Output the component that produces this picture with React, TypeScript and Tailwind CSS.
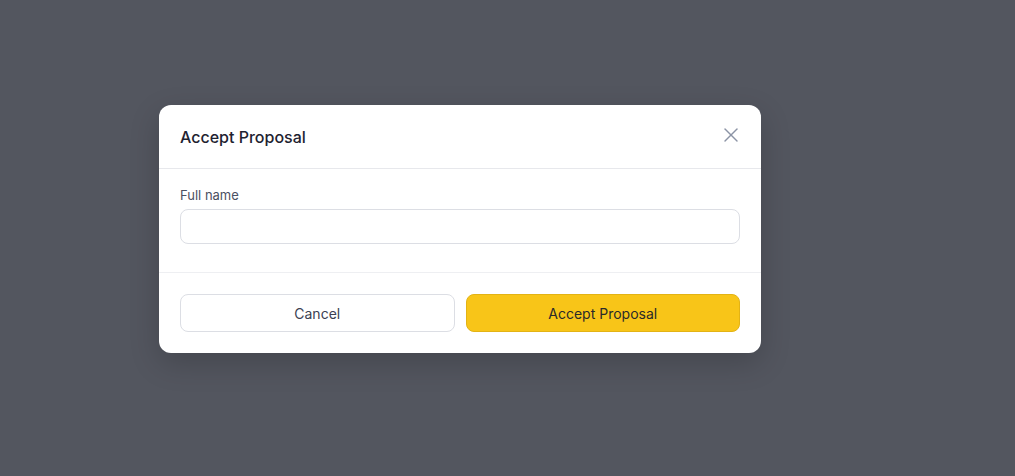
import { X } from 'lucide-react';

const App = () => {
  return (
    <div
      className="min-h-[476px] w-full bg-[#53565f] pl-[159px] pt-[105px]"
      style={{ fontFamily: 'Inter, "Noto Sans", sans-serif' }}
    >
      <div className="w-[602px] rounded-xl bg-white shadow-[0_10px_30px_rgba(0,0,0,0.18)]">
        {/* Header */}
        <div className="flex h-[64px] items-center justify-between border-b border-[#e7e8ec] pl-[21px] pr-[18px]">
          <h2 className="mt-[1px] text-[16px] font-medium text-[#1e2230]">Accept Proposal</h2>
          <button className="-mt-[4px] text-[#8b93a5]">
            <X size={24} strokeWidth={1.4} />
          </button>
        </div>

        {/* Body */}
        <div className="border-b border-[#eeeff2] px-[21px] pb-[28px] pt-[17px]">
          <label className="mb-[5px] block text-[13px] leading-[18px] text-[#4b5162]">Full name</label>
          <input
            type="text"
            className="block h-[35px] w-full rounded-lg border border-[#dcdee4] bg-white px-3 text-sm outline-none"
          />
        </div>

        {/* Footer */}
        <div className="flex gap-[11px] px-[21px] pb-[21px] pt-[21px]">
          <button className="h-[38px] flex-1 rounded-lg border border-[#dcdee4] bg-white text-[14px] text-[#3b4152]">
            Cancel
          </button>
          <button className="h-[38px] flex-1 rounded-lg border border-[#e3b315] bg-[#f8c518] text-[14px] text-[#2a2a2a]">
            Accept Proposal
          </button>
        </div>
      </div>
    </div>
  );
};

export default App;
